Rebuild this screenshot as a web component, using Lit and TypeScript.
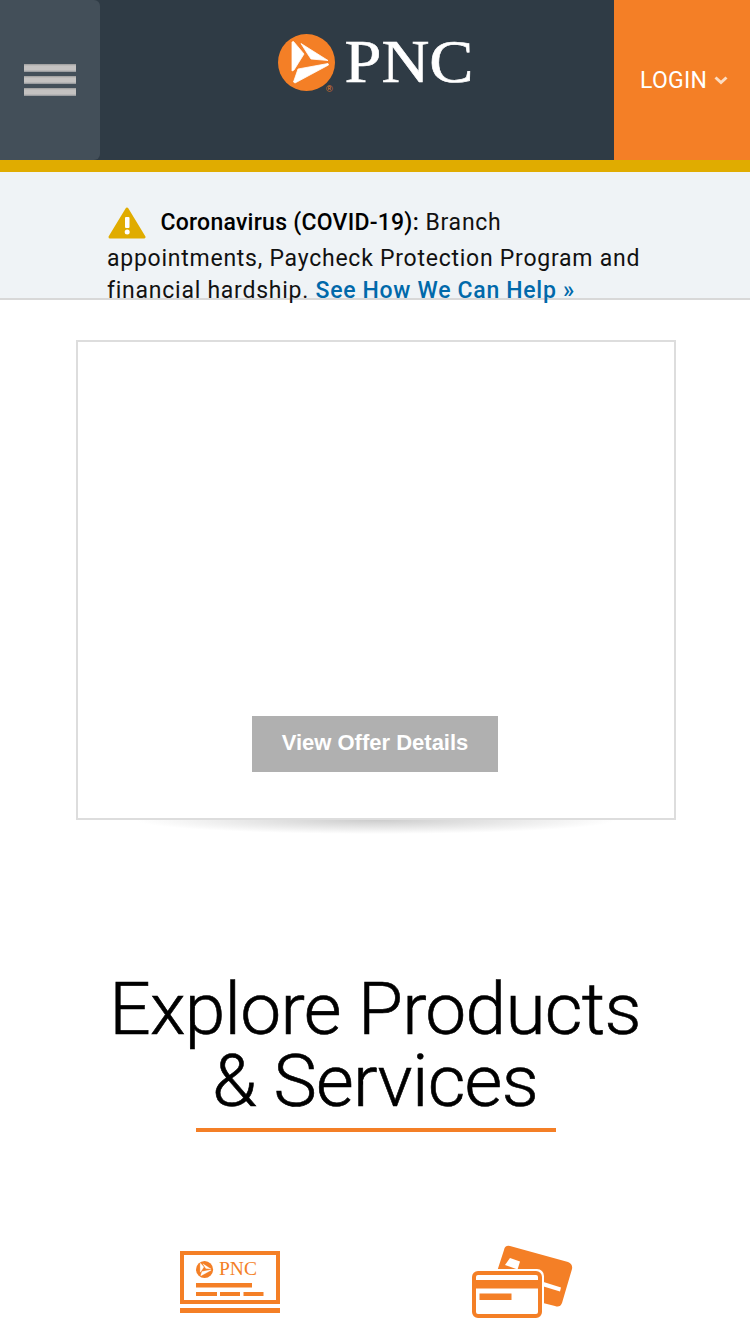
import {LitElement, css, html, svg} from 'lit';
import {customElement} from 'lit/decorators.js';

const mark = svg`
	<circle cx="28.5" cy="28.5" r="28.5" fill="#f47f26" />
	<g fill="#fff" stroke="#fff" stroke-width=".8" stroke-linejoin="round">
		<path d="M14 8 L15.5 7.5 L26 20 L16 36 L14 37 Z" />
		<path d="M23 9.5 L50 26.5 L33 25 L29 19 Z" />
		<path d="M20 35 L50 29.5 L50.5 31 L17 49 L15.5 48 Z" />
	</g>
`;

@customElement('app-root')
export class AppRoot extends LitElement {
	render() {
		return html`
			<header class="header">
				<div class="menu">
					<span class="bar"></span>
					<span class="bar"></span>
					<span class="bar"></span>
				</div>
				<div class="brand">
					<svg width="200" height="72" viewBox="0 -8 200 72">
						${mark}
						<text x="66.5" y="48" font-family="Liberation Serif" font-size="61" fill="#fff" stroke="#fff" stroke-width=".6" textLength="129" lengthAdjust="spacingAndGlyphs">PNC</text>
						<text x="48" y="58" font-family="Liberation Sans" font-size="9" fill="#f47f26">®</text>
					</svg>
				</div>
				<div class="login">
					<span>LOGIN</span>
					<svg width="14" height="9" viewBox="0 0 14 9">
						<path d="M1.5 1.5 L7 6.5 L12.5 1.5" fill="none" stroke="#fbdcc2" stroke-width="3" />
					</svg>
				</div>
			</header>

			<section class="notice">
				<p>
					<span class="line first">
						<svg class="warn" width="38" height="34" viewBox="0 0 38 34">
							<path d="M19 3 L36 31 H2 Z" fill="#e0ac00" stroke="#e0ac00" stroke-width="3" stroke-linejoin="round" />
							<rect x="17" y="11" width="4.5" height="11" rx="1" fill="#fff" />
							<circle cx="19.2" cy="26" r="2.5" fill="#fff" />
						</svg>
						<strong>Coronavirus (COVID-19):</strong> Branch
					</span>
					<span class="line">appointments, Paycheck Protection Program and</span>
					<span class="line">financial hardship. <a>See How We Can Help »</a></span>
				</p>
			</section>

			<section class="offer">
				<div class="card">
					<button class="details">View Offer Details</button>
				</div>
				<div class="shadow"></div>
			</section>

			<section class="explore">
				<h1>Explore Products<br />&amp; Services</h1>
				<div class="rule"></div>
				<div class="icons">
					<svg width="100" height="62" viewBox="0 0 100 62">
						<path d="M0 0 H100 V53 H0 Z M4 4 V49 H96 V4 Z" fill="#f47f26" fill-rule="evenodd" />
						<rect y="57" width="100" height="5" fill="#f47f26" />
						<g transform="translate(16 10) scale(.3)">${mark}</g>
						<text x="39" y="24" font-family="Liberation Serif" font-size="18" fill="#f47f26" textLength="38" lengthAdjust="spacingAndGlyphs">PNC</text>
						<rect x="16" y="32" width="56" height="4.5" fill="#f47f26" />
						<rect x="16" y="41" width="21" height="4" fill="#f47f26" />
						<rect x="40" y="41" width="20" height="4" fill="#f47f26" />
						<rect x="63.5" y="41" width="20" height="4" fill="#f47f26" />
					</svg>
					<svg width="102" height="74" viewBox="0 0 102 74">
						<path d="M38 1 L96 17 Q101 19 100 24 L90 58 Q88 63 83 61 L19 45 L32 5 Q33 0 38 1 Z" fill="#f47f26" />
						<path d="M38 13 L48 16.5 L45.5 24.5 L33 20 Z" fill="#fff" />
						<path d="M70 36.5 L89 42.5 L88 46.5 L70 41 Z" fill="#fff" />
						<rect x="-2" y="24" width="74" height="51" rx="7" fill="#fff" />
						<rect x="2" y="28" width="66" height="43" rx="4" fill="#fff" stroke="#f47f26" stroke-width="4" />
						<rect x="2" y="35" width="66" height="8.5" fill="#f47f26" />
						<rect x="7.5" y="48.5" width="32" height="6.5" fill="#f47f26" />
					</svg>
				</div>
			</section>
		`;
	}

	static styles = css`
		:host {
			display: block;
			width: 750px;
			height: 1334px;
			overflow: hidden;
			background: #fff;
			font-family: Roboto, 'Liberation Sans', sans-serif;
		}

		.header {
			display: flex;
			height: 160px;
			background: #2f3b45;
			border-bottom: 12px solid #e0ac00;
		}

		.menu {
			display: flex;
			flex-direction: column;
			justify-content: center;
			gap: 4px;
			box-sizing: border-box;
			width: 100px;
			padding: 0 24px;
			background: #434f59;
			border-radius: 0 6px 6px 0;
		}

		.bar {
			display: block;
			height: 8px;
			background: linear-gradient(#9a9a9a, #c4c2c1 25%, #c4c2c1 75%, #8f9296);
		}

		.brand {
			flex: 1;
			display: flex;
			align-items: flex-start;
			justify-content: center;
			padding: 26px 0 0 42px;
		}

		.login {
			display: flex;
			align-items: center;
			gap: 7px;
			box-sizing: border-box;
			width: 136px;
			padding-left: 26px;
			background: #f47f26;
			color: #fff;
			font-size: 23px;
			letter-spacing: 0.3px;
		}

		.notice {
			box-sizing: border-box;
			height: 128px;
			padding: 34px 100px 0 107px;
			background: #eff3f6;
			border-bottom: 2px solid #d8d8d8;
		}

		.notice p {
			margin: 0;
			font-size: 23px;
			letter-spacing: 0.75px;
			color: #111;
			white-space: nowrap;
		}

		.line {
			display: block;
			line-height: 32px;
		}

		.line.first {
			margin-bottom: 4px;
		}

		.notice strong {
			font-weight: 500;
			letter-spacing: 0.25px;
			color: #000;
		}

		.notice a {
			font-weight: 500;
			letter-spacing: 0.7px;
			color: #0069aa;
		}

		.warn {
			margin: 0 8px -10px 1px;
		}

		.offer {
			padding: 40px 74px 0 76px;
		}

		.card {
			display: flex;
			align-items: flex-end;
			justify-content: center;
			box-sizing: border-box;
			height: 480px;
			padding: 0 2px 46px 0;
			border: 2px solid #ddd;
		}

		.details {
			width: 246px;
			height: 56px;
			padding-bottom: 4px;
			border: 0;
			background: #b0b0b0;
			color: #fff;
			font-family: 'Liberation Sans', sans-serif;
			font-size: 22px;
			font-weight: 700;
		}

		.shadow {
			height: 14px;
			margin: 0 60px;
			background: radial-gradient(50% 100% at 50% 0, #ccc, rgba(255, 255, 255, 0));
		}

		.explore {
			display: flex;
			flex-direction: column;
			align-items: center;
			padding-top: 139px;
		}

		h1 {
			margin: 0;
			font-size: 73px;
			font-weight: 300;
			line-height: 72px;
			letter-spacing: -0.7px;
			-webkit-text-stroke: 0.6px #000;
			text-align: center;
			color: #000;
		}

		.rule {
			width: 360px;
			height: 4px;
			margin: 11px 0 0 2px;
			background: #f47f26;
		}

		.icons {
			display: flex;
			align-items: center;
			gap: 192px;
			margin-top: 113px;
			padding-left: 4px;
		}
	`;
}

declare global {
	interface HTMLElementTagNameMap {
		'app-root': AppRoot;
	}
}
